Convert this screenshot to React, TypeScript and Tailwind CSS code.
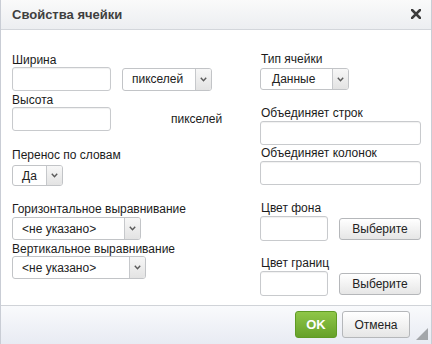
import React from 'react';

const font = { fontFamily: '"Liberation Sans", Arial, sans-serif' };

function Label({ children, className = '' }: { children: React.ReactNode; className?: string }) {
    return <div className={`h-[14px] leading-[14px] text-[12px] text-[#1b1b1b] whitespace-nowrap ${className}`}>{children}</div>;
}

function TextInput({ className = '' }: { className?: string }) {
    return <div className={`bg-white border border-[#c8cacd] rounded-[3px] shadow-[inset_0_1px_1px_rgba(0,0,0,0.06)] ${className}`} />;
}

function Select({ value, className = '' }: { value: string; className?: string }) {
    return (
        <div className={`flex bg-white border border-[#c2c4c7] rounded-[3px] overflow-hidden ${className}`}>
            <div className="flex-1 flex items-center pl-[9px] text-[12px] text-[#222] whitespace-nowrap">{value}</div>
            <div className="w-[16px] flex items-center justify-center border-l border-[#c6c8cb] bg-gradient-to-b from-[#f7f7f7] to-[#e3e3e3]">
                <svg width="7" height="5" viewBox="0 0 7 5">
                    <path d="M0.8 0.8 L3.5 3.8 L6.2 0.8" fill="none" stroke="#5a5a5a" strokeWidth="1.4" />
                </svg>
            </div>
        </div>
    );
}

function PickButton({ className = '' }: { className?: string }) {
    return (
        <button className={`w-[82px] h-[22px] rounded-[3px] border border-[#b5b7ba] bg-gradient-to-b from-white to-[#e6e6e6] text-[12px] text-[#222] ${className}`}>
            Выберите
        </button>
    );
}

export default function App() {
    return (
        <div className="w-[432px] h-[344px] overflow-hidden bg-white relative" style={font}>
            <div className="w-full h-full flex flex-col border-x border-[#c9cdd5]">
                {/* title */}
                <div className="h-[30px] shrink-0 flex items-center justify-between pl-[11px] pr-[10px] pt-[1px] border-b border-[#d3d6db] bg-gradient-to-b from-[#fafafa] to-[#eceef1]">
                    <span className="text-[13px] font-bold text-[#3f3f3f]">Свойства ячейки</span>
                    <svg width="10" height="10" viewBox="0 0 10 10" className="mb-[3px]">
                        <path d="M1 1 L9 9 M9 1 L1 9" stroke="#3c3c3c" strokeWidth="2.6" strokeLinecap="square" />
                    </svg>
                </div>

                {/* body */}
                <div className="flex-1 grid grid-cols-[248px_161px] pl-[11px] pr-[11px]">
                    <div className="flex flex-col items-start">
                        <Label className="mt-[23px]">Ширина</Label>
                        <div className="flex items-center gap-[11px]">
                            <TextInput className="w-[99px] h-[24px]" />
                            <Select value="пикселей" className="w-[90px] h-[23px]" />
                        </div>
                        <Label className="mt-[2px]">Высота</Label>
                        <div className="flex items-center">
                            <TextInput className="w-[99px] h-[24px]" />
                            <span className="ml-[60px] text-[12px] text-[#1b1b1b]">пикселей</span>
                        </div>
                        <Label className="mt-[17px]">Перенос по словам</Label>
                        <Select value="Да" className="mt-[3px] w-[51px] h-[21px]" />
                        <Label className="mt-[16px]">Горизонтальное выравнивание</Label>
                        <Select value="<не указано>" className="mt-[1px] w-[129px] h-[23px]" />
                        <Label className="mt-[2px]">Вертикальное выравнивание</Label>
                        <Select value="<не указано>" className="w-[134px] h-[23px]" />
                    </div>

                    <div className="flex flex-col">
                        <Label className="mt-[22px] pl-[1px]">Тип ячейки</Label>
                        <Select value="Данные" className="mt-[2px] w-[89px] h-[22px] [&>div:first-child]:pl-[11px]" />
                        <Label className="mt-[16px] pl-[1px]">Объединяет строк</Label>
                        <TextInput className="mt-[1px] w-[161px] h-[24px]" />
                        <Label className="mt-[1px] pl-[1px]">Объединяет колонок</Label>
                        <TextInput className="mt-[1px] w-[161px] h-[24px]" />
                        <Label className="mt-[16px] pl-[1px]">Цвет фона</Label>
                        <div className="mt-[1px] flex items-center gap-[11px]">
                            <TextInput className="w-[68px] h-[25px]" />
                            <PickButton />
                        </div>
                        <Label className="mt-[15px] pl-[1px]">Цвет границ</Label>
                        <div className="mt-[1px] flex items-center gap-[11px]">
                            <TextInput className="w-[68px] h-[25px]" />
                            <PickButton />
                        </div>
                    </div>
                </div>

                {/* footer */}
                <div className="h-[39px] shrink-0 border-t border-[#d0d3d8] bg-gradient-to-b from-[#f9fafc] to-[#e8ebf3] flex justify-end items-start pt-[5px] pr-[21px] gap-[5px]">
                    <button className="w-[42px] h-[27px] rounded-[3px] border border-[#5f9a25] bg-gradient-to-b from-[#8fc648] to-[#66a129] text-white text-[13px] font-bold">
                        OK
                    </button>
                    <button className="w-[68px] h-[27px] rounded-[3px] border border-[#b5b7ba] bg-gradient-to-b from-white to-[#e6e6e6] text-[12px] text-[#222]">
                        Отмена
                    </button>
                </div>
            </div>
            <svg width="12" height="12" viewBox="0 0 12 12" className="absolute right-[4px] bottom-[4px]">
                <path d="M12 0 L12 12 L0 12 Z" fill="#a3a6aa" />
            </svg>
        </div>
    );
}
